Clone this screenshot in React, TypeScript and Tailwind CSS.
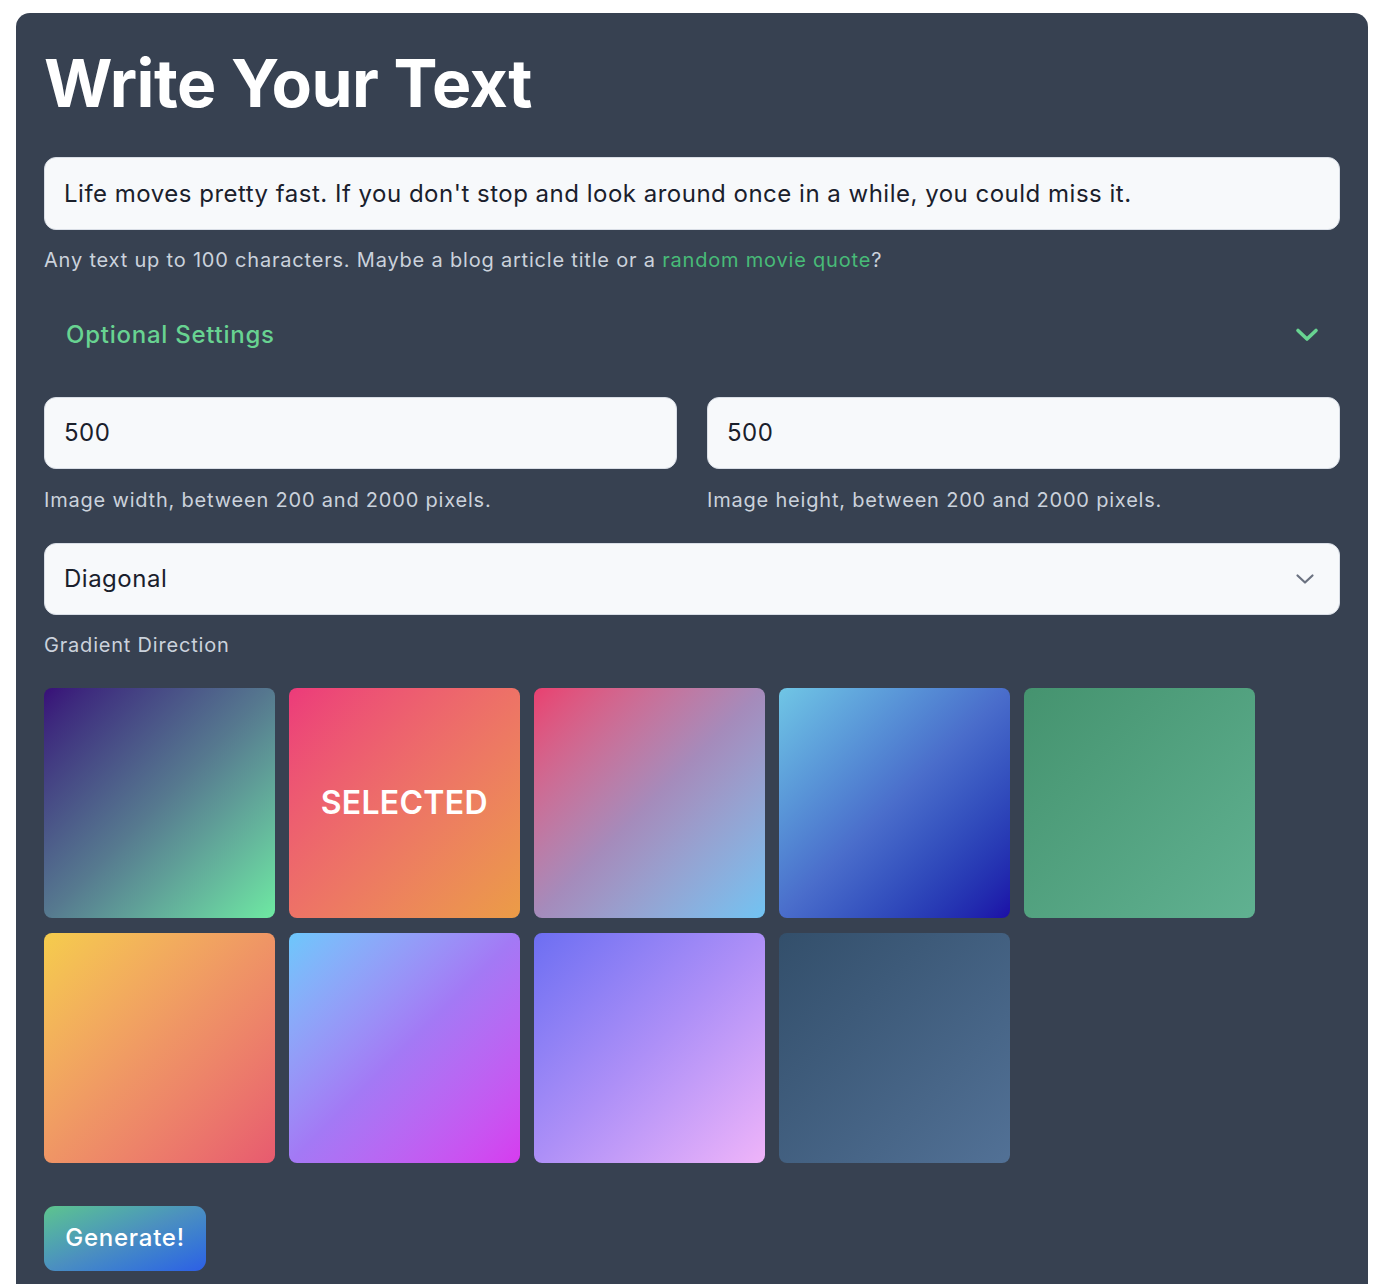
import React from "react";

const swatches: { cls: string; selected?: boolean }[] = [
  { cls: "bg-gradient-to-br from-[#380d78] via-[#56798f] to-[#6ee9a2]" },
  { cls: "bg-gradient-to-br from-[#ec3a7a] to-[#eb9c46]", selected: true },
  { cls: "bg-gradient-to-br from-[#e93f70] via-[#a58bbb] to-[#70c3f2]" },
  { cls: "bg-gradient-to-br from-[#70c6e5] via-[#4a6dcb] to-[#1d0ca7]" },
  { cls: "bg-gradient-to-br from-[#45936f] to-[#60b191]" },
  { cls: "bg-gradient-to-br from-[#f5cc4c] via-[#ef9565] to-[#e75a6f]" },
  { cls: "bg-gradient-to-br from-[#6cc7fb] via-[#a379f5] to-[#d63bef]" },
  { cls: "bg-gradient-to-br from-[#6d6ef2] via-[#ad8ff7] to-[#efb4f9]" },
  { cls: "bg-gradient-to-br from-[#334f6b] to-[#527196]" },
];

export default function App() {
  return (
    <div className="min-h-screen bg-white pt-[13px] pl-[16px] pr-[20px] font-['Inter','Noto_Sans',sans-serif]">
      <div className="rounded-[14px] bg-[#374151] px-[28px] pt-[28px] pb-[28px]">
        <h1 className="text-[66px] leading-[84px] font-bold text-white tracking-[-0.5px]">
          Write Your Text
        </h1>

        <div className="mt-[32px] h-[73px] rounded-[12px] bg-[#f7f9fb] border border-[#d9dee6] flex items-center px-[19px] text-[24px] tracking-[0.5px] text-[#1a202c]">
          Life moves pretty fast. If you don't stop and look around once in a while, you could miss it.
        </div>
        <p className="mt-[16px] text-[20px] leading-[28px] tracking-[0.8px] text-[#cbd2dc]">
          Any text up to 100 characters. Maybe a blog article title or a{" "}
          <a className="text-[#48bb78]" href="#">random movie quote</a>?
        </p>

        <div className="mt-[26px] h-[70px] flex items-center justify-between pl-[22px] pr-[21px]">
          <span className="text-[24px] font-medium tracking-[0.75px] text-[#68d391]">Optional Settings</span>
          <svg width="24" height="16" viewBox="0 0 24 16" fill="none">
            <path d="M3 3.5 L12 12 L21 3.5" stroke="#68d391" strokeWidth="3.6" strokeLinecap="round" strokeLinejoin="round" />
          </svg>
        </div>

        <div className="mt-[27px] grid grid-cols-2 gap-x-[30px]">
          <div>
            <div className="h-[72px] rounded-[12px] bg-[#f7f9fb] border border-[#d9dee6] flex items-center px-[19px] text-[24px] tracking-[0.5px] text-[#1a202c]">
              500
            </div>
            <p className="mt-[17px] text-[20px] leading-[28px] tracking-[0.8px] text-[#cbd2dc]">
              Image width, between 200 and 2000 pixels.
            </p>
          </div>
          <div>
            <div className="h-[72px] rounded-[12px] bg-[#f7f9fb] border border-[#d9dee6] flex items-center px-[19px] text-[24px] tracking-[0.5px] text-[#1a202c]">
              500
            </div>
            <p className="mt-[17px] text-[20px] leading-[28px] tracking-[0.8px] text-[#cbd2dc]">
              Image height, between 200 and 2000 pixels.
            </p>
          </div>
        </div>

        <div className="mt-[29px] h-[72px] rounded-[12px] bg-[#f7f9fb] border border-[#d9dee6] flex items-center justify-between pl-[19px] pr-[24px] text-[24px] tracking-[0.5px] text-[#1a202c]">
          <span>Diagonal</span>
          <svg width="20" height="12" viewBox="0 0 20 12" fill="none">
            <path d="M2.5 2.5 L10 9.5 L17.5 2.5" stroke="#6b7280" strokeWidth="2.2" strokeLinecap="round" strokeLinejoin="round" />
          </svg>
        </div>
        <p className="mt-[16px] text-[20px] leading-[28px] tracking-[0.8px] text-[#cbd2dc]">Gradient Direction</p>

        <div className="mt-[29px] grid grid-cols-[repeat(5,230.5px)] gap-[14.5px]">
          {swatches.map((s, i) => (
            <div
              key={i}
              className={`h-[230px] rounded-[8px] flex items-center justify-center ${s.cls}`}
            >
              {s.selected && (
                <span className="text-[32px] font-semibold text-white tracking-[0.3px]">SELECTED</span>
              )}
            </div>
          ))}
        </div>

        <button className="mt-[43px] h-[65px] w-[162px] rounded-[11px] bg-gradient-to-br from-[#5ec48c] via-[#4b8fc0] to-[#2e5ee6] text-[24px] font-medium tracking-[0.75px] text-white">
          Generate!
        </button>
      </div>
    </div>
  );
}
